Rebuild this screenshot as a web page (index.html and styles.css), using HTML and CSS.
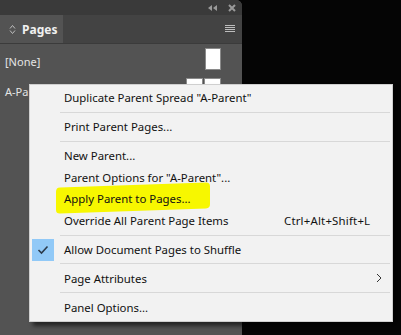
FILE: index.html
```html
<!DOCTYPE html>
<html>
<head>
<meta charset="utf-8">
<link rel="stylesheet" href="styles.css">
</head>
<body>
<div class="screen">
  <div class="panel">
    <div class="titlebar">
      <svg class="collapse" width="9" height="6" viewBox="0 0 9 6"><path d="M4 0V6L0 3ZM9 0V6L5 3Z" fill="#9a9a9a"/></svg>
      <svg class="close" width="8" height="8" viewBox="0 0 8 8"><path d="M1 1L7 7M7 1L1 7" stroke="#9a9a9a" stroke-width="2"/></svg>
    </div>
    <div class="tabrow">
      <div class="tab">
        <svg class="updown" width="7" height="11" viewBox="0 0 7 11"><path d="M1 4.5L3.5 1.5L6 4.5M1 6.5L3.5 9.5L6 6.5" fill="none" stroke="#bdbdbd" stroke-width="1"/></svg>
        <span class="tab-label">Pages</span>
      </div>
      <div class="tab-fill">
        <svg class="hamb" width="10" height="8" viewBox="0 0 10 8"><path d="M0 0.5H10M0 2.5H10M0 4.5H10M0 6.5H10" stroke="#bdbdbd" stroke-width="1"/></svg>
      </div>
    </div>
    <div class="panel-body">
      <div class="parent-row row-none">
        <span class="parent-name">[None]</span>
        <div class="thumbs"><div class="thumb"></div></div>
      </div>
      <div class="parent-row row-a">
        <span class="parent-name">A-Parent</span>
        <div class="thumbs"><div class="thumb"></div><div class="thumb"></div></div>
      </div>
    </div>
  </div>

  <div class="menu">
    <div class="item"><span class="label">Duplicate Parent Spread "A-Parent"</span></div>
    <div class="sep"></div>
    <div class="item"><span class="label">Print Parent Pages...</span></div>
    <div class="sep"></div>
    <div class="item"><span class="label">New Parent...</span></div>
    <div class="item"><span class="label">Parent Options for "A-Parent"...</span></div>
    <div class="item"><span class="highlight"></span><span class="label">Apply Parent to Pages...</span></div>
    <div class="item"><span class="label">Override All Parent Page Items</span><span class="shortcut">Ctrl+Alt+Shift+L</span></div>
    <div class="sep"></div>
    <div class="item">
      <span class="check"><svg width="12" height="10" viewBox="0 0 12 10"><path d="M1.5 5L4.5 8L10.5 1.5" fill="none" stroke="#2b3a4a" stroke-width="1.6"/></svg></span>
      <span class="label">Allow Document Pages to Shuffle</span>
    </div>
    <div class="sep"></div>
    <div class="item"><span class="label">Page Attributes</span>
      <svg class="arrow" width="6" height="10" viewBox="0 0 6 10"><path d="M1 1L5 5L1 9" fill="none" stroke="#333" stroke-width="1"/></svg>
    </div>
    <div class="sep"></div>
    <div class="item"><span class="label">Panel Options...</span></div>
  </div>
</div>
</body>
</html>
```
FILE: styles.css
```css
html, body {
  margin: 0;
  padding: 0;
  background: #000;
}
.screen {
  position: relative;
  width: 401px;
  height: 335px;
  overflow: hidden;
  background: #050505;
  font-family: "Noto Sans", "Open Sans", sans-serif;
}
.panel {
  width: 242px;
  height: 335px;
  background: #535353;
  border-top-right-radius: 6px;
  overflow: hidden;
  display: flex;
  flex-direction: column;
}
.titlebar {
  height: 15px;
  background: #3a3a3a;
  display: flex;
  align-items: center;
  justify-content: flex-end;
  gap: 11px;
  padding-right: 6px;
}
.collapse { display: block; }
.close { display: block; }
.tabrow {
  height: 28px;
  display: flex;
  background: #434343;
  border-bottom: 1px solid #3b3b3b;
}
.tab {
  width: 63px;
  background: #535353;
  display: flex;
  align-items: center;
  gap: 6px;
  padding-left: 9px;
  box-sizing: border-box;
}
.tab-label {
  color: #f0f0f0;
  font-weight: bold;
  font-size: 12px;
}
.tab-fill {
  flex: 1;
  display: flex;
  align-items: center;
  justify-content: flex-end;
  padding-right: 7px;
}
.hamb { display: block; }
.panel-body {
  flex: 1;
  padding-top: 4px;
}
.parent-row {
  display: flex;
  align-items: flex-start;
  justify-content: space-between;
  padding: 0 21px 0 5px;
  height: 30px;
}
.parent-name {
  color: #e4e4e4;
  font-size: 11px;
  margin-top: 6px;
}
.thumbs { display: flex; gap: 1px; }
.thumb {
  width: 16px;
  height: 22px;
  background: #fff;
  border: 1px solid #8a8a8a;
  box-sizing: border-box;
}
.row-a .thumb { width: 17px; }

.menu {
  position: absolute;
  left: 29px;
  top: 84px;
  width: 364px;
  box-sizing: border-box;
  background: #f2f2f2;
  border: 1px solid #cfcfcf;
  padding: 2px 0 3px 0;
  box-shadow: 4px 4px 4px rgba(0,0,0,0.55);
}
.item {
  position: relative;
  height: 21.6px;
  display: flex;
  align-items: center;
  padding-left: 34px;
  font-size: 11.4px;
  color: #111;
}
.label { position: relative; white-space: nowrap; }
.shortcut {
  position: absolute;
  left: 254px;
  white-space: nowrap;
  letter-spacing: 0.2px;
}
.sep {
  height: 1px;
  background: #d8d8d8;
  margin: 3.2px 2px 3.2px 30px;
}
.check {
  position: absolute;
  left: 2px;
  top: 0;
  width: 22px;
  height: 22px;
  background: #91c9f7;
  display: flex;
  align-items: center;
  justify-content: center;
}
.arrow {
  position: absolute;
  left: 346px;
}
.highlight {
  position: absolute;
  left: 26px;
  top: -3px;
  width: 154px;
  height: 26px;
  background: #f7f700;
  border-radius: 4px;
  transform: skewY(-2deg);
}
```
